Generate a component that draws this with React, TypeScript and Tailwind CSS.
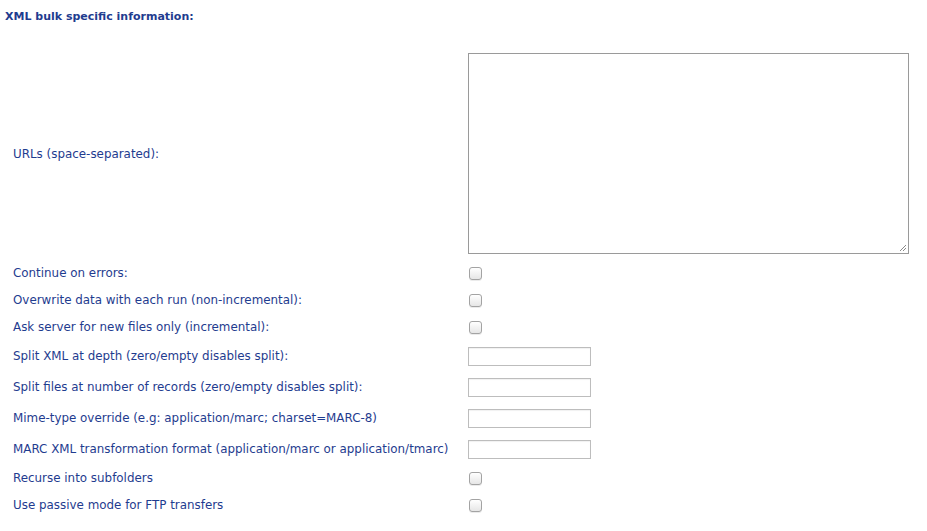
import React from "react";

type Row = { label: string; kind: "check" | "text" };

const rows: Row[] = [
  { label: "Continue on errors:", kind: "check" },
  { label: "Overwrite data with each run (non-incremental):", kind: "check" },
  { label: "Ask server for new files only (incremental):", kind: "check" },
  { label: "Split XML at depth (zero/empty disables split):", kind: "text" },
  { label: "Split files at number of records (zero/empty disables split):", kind: "text" },
  { label: "Mime-type override (e.g: application/marc; charset=MARC-8)", kind: "text" },
  { label: "MARC XML transformation format (application/marc or application/tmarc)", kind: "text" },
  { label: "Recurse into subfolders", kind: "check" },
  { label: "Use passive mode for FTP transfers", kind: "check" },
];

function Check() {
  return (
    <input
      type="checkbox"
      className="appearance-none w-[13px] h-[13px] ml-[1px] rounded-[3px] border border-[#a3a3a3] bg-gradient-to-b from-white to-[#e6e6e6] shadow-[0_1px_0_rgba(0,0,0,0.08)] block"
    />
  );
}

function TextBox() {
  return (
    <input
      type="text"
      className="block w-[123px] h-[19px] border border-[#bdbdbd] bg-white outline-none shadow-[inset_0_1px_1px_rgba(0,0,0,0.06)]"
    />
  );
}

export default function App() {
  return (
    <div
      className="w-[927px] h-[531px] bg-white text-[#1f3c8f] text-[11.9px]"
      style={{ fontFamily: '"DejaVu Sans", Verdana, sans-serif' }}
    >
      <div className="pl-[5px] pt-[9px] h-[47px] font-bold text-[11px]">XML bulk specific information:</div>

      <div className="flex py-[6px]">
        <div className="w-[468px] pl-[13px] flex items-center pt-[2px]">URLs (space-separated):</div>
        <div className="relative w-[441px] h-[201px] border border-[#9a9a9a] bg-white">
          <svg
            className="absolute right-[1px] bottom-[1px]"
            width="9"
            height="9"
            viewBox="0 0 9 9"
          >
            <path d="M8 2 L2 8 M8 5 L5 8" stroke="#8a8a8a" strokeWidth="1" />
          </svg>
        </div>
      </div>

      {rows.map((r) => (
        <div
          key={r.label}
          className={
            r.kind === "check"
              ? "flex items-center h-[27px]"
              : "flex items-center h-[31px]"
          }
        >
          <div className="w-[468px] pl-[13px] pt-[1px] whitespace-nowrap">{r.label}</div>
          {r.kind === "check" ? <Check /> : <TextBox />}
        </div>
      ))}
    </div>
  );
}
